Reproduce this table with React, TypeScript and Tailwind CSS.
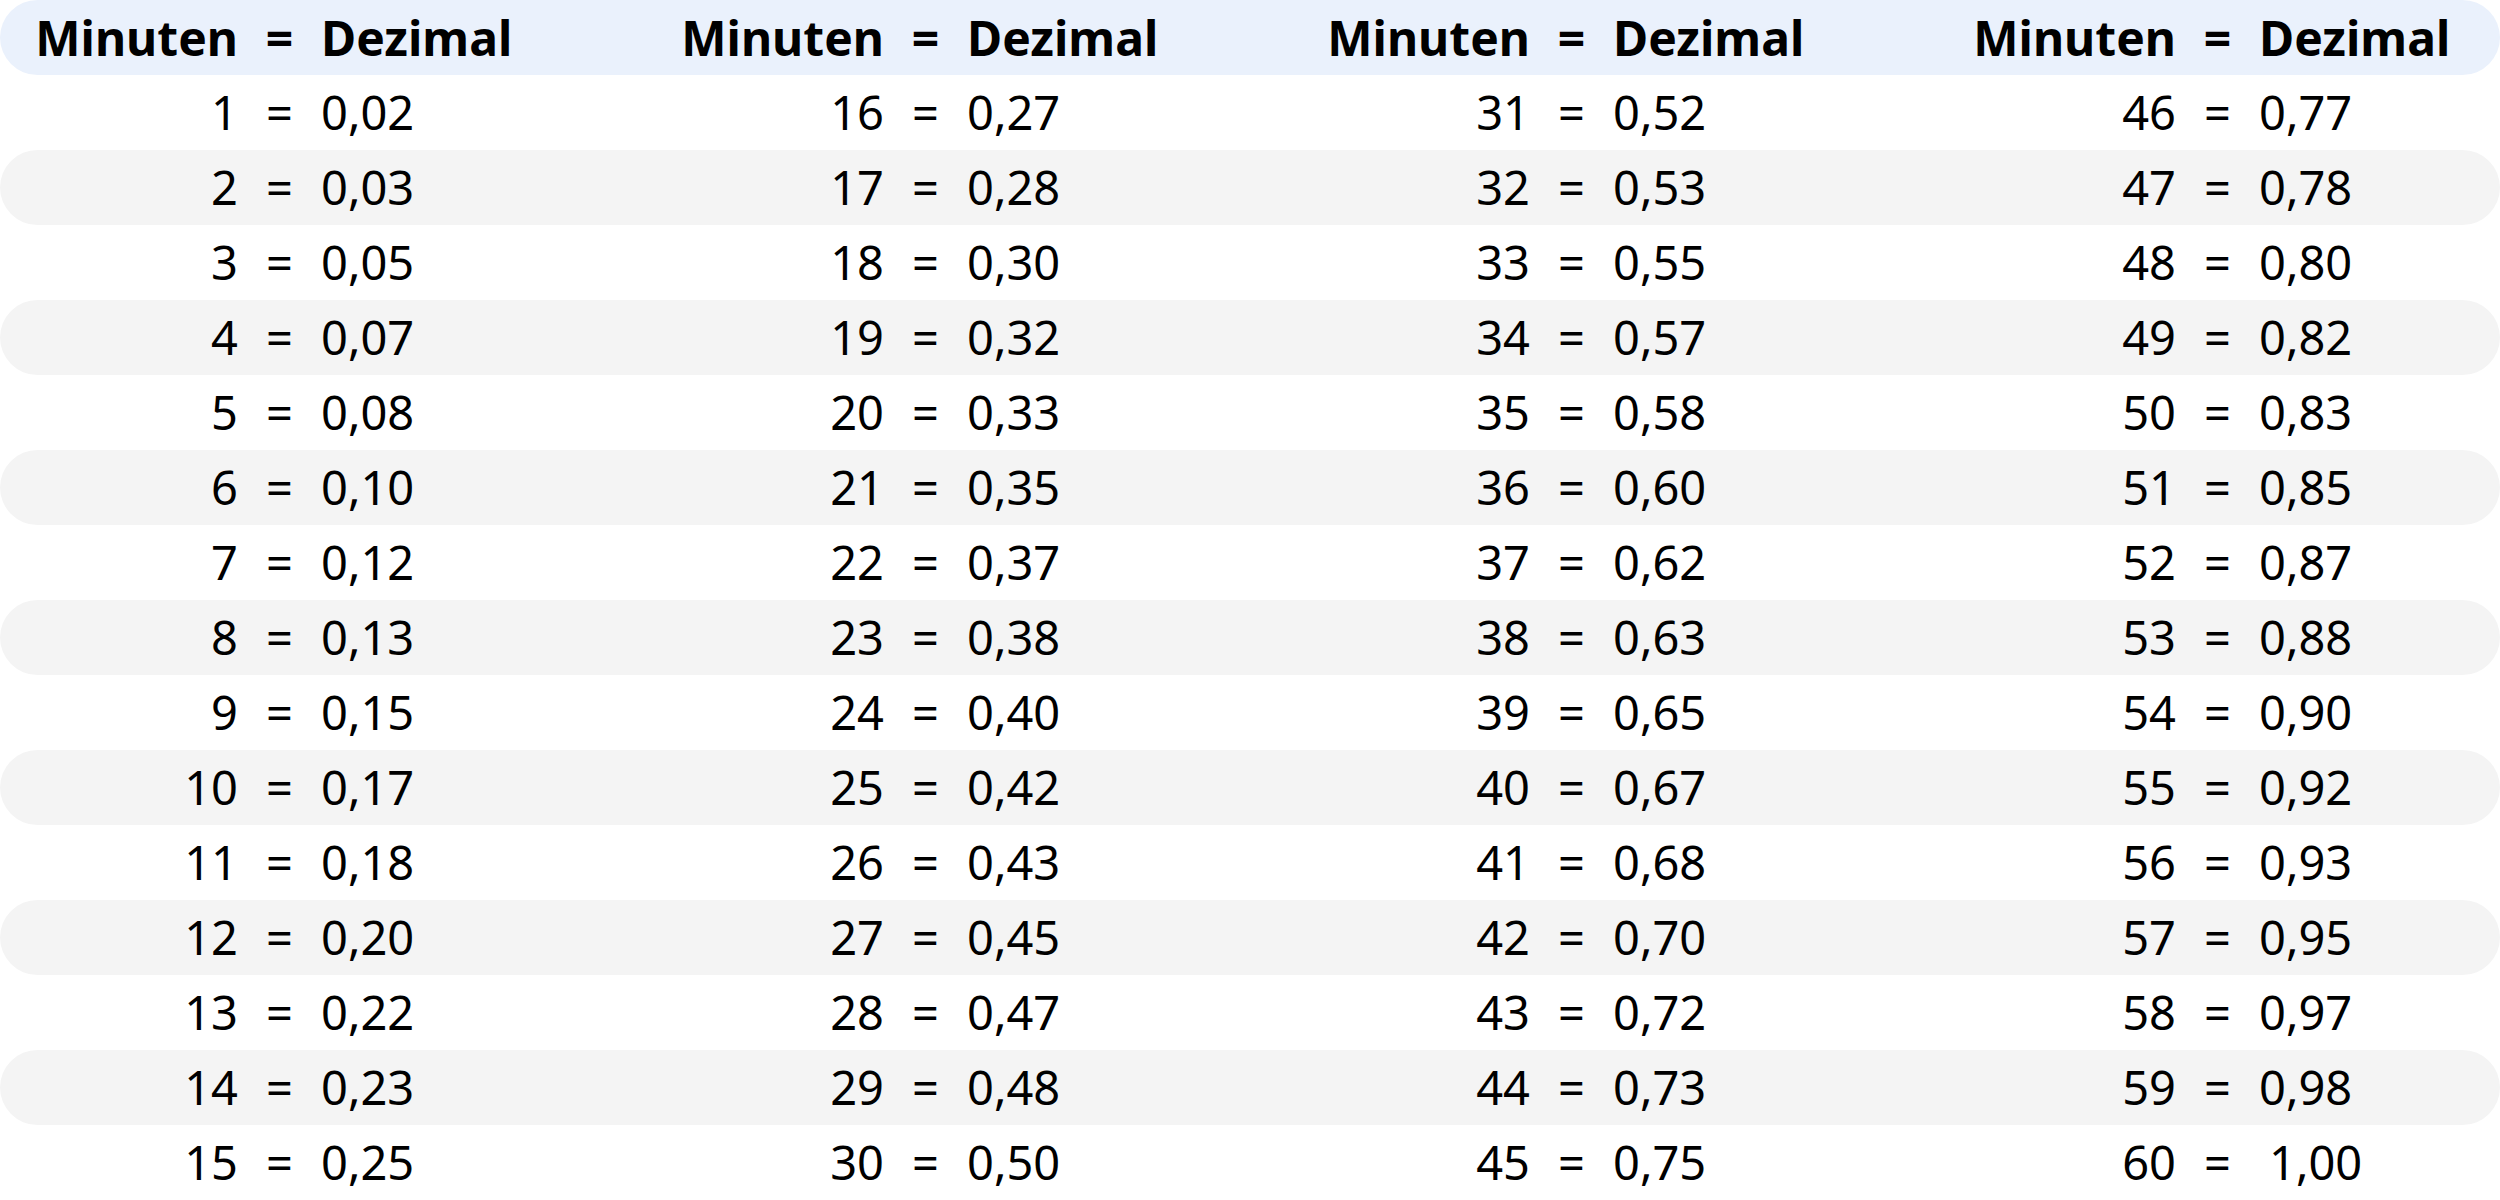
import React from "react";

const fmt = (m: number) => (m / 60).toFixed(2).replace(".", ",");

function Group({ a, b, bold, isOne }: { a: string; b: string; bold?: boolean; isOne?: boolean }) {
  const w = bold ? "font-bold text-[48px]" : "text-[47px]";
  return (
    <div className="flex items-center h-full">
      <span className={`w-[238px] text-right ${w}`}>{a}</span>
      <span className={`w-[83px] text-center ${w}`}>=</span>
      <span className={`${w} ${isOne ? "pl-[10px]" : ""}`}>{b}</span>
    </div>
  );
}

export default function App() {
  const rows = Array.from({ length: 15 }, (_, i) => i + 1);
  return (
    <div
      className="w-[2500px] h-[1200px] bg-white text-black leading-none"
      style={{ fontFamily: '"Noto Sans", Inter, sans-serif' }}
    >
      <div className="h-[75px] rounded-full bg-[#eaf1fc] grid grid-cols-[646px_646px_646px_1fr]">
        {[0, 1, 2, 3].map((c) => (
          <Group key={c} a="Minuten" b="Dezimal" bold />
        ))}
      </div>
      {rows.map((r) => (
        <div
          key={r}
          className={`h-[75px] rounded-full grid grid-cols-[646px_646px_646px_1fr] ${
            r % 2 === 0 ? "bg-[#f4f4f4]" : "bg-white"
          }`}
        >
          {[0, 1, 2, 3].map((c) => {
            const m = r + c * 15;
            return <Group key={c} a={String(m)} b={fmt(m)} isOne={m === 60} />;
          })}
        </div>
      ))}
    </div>
  );
}
